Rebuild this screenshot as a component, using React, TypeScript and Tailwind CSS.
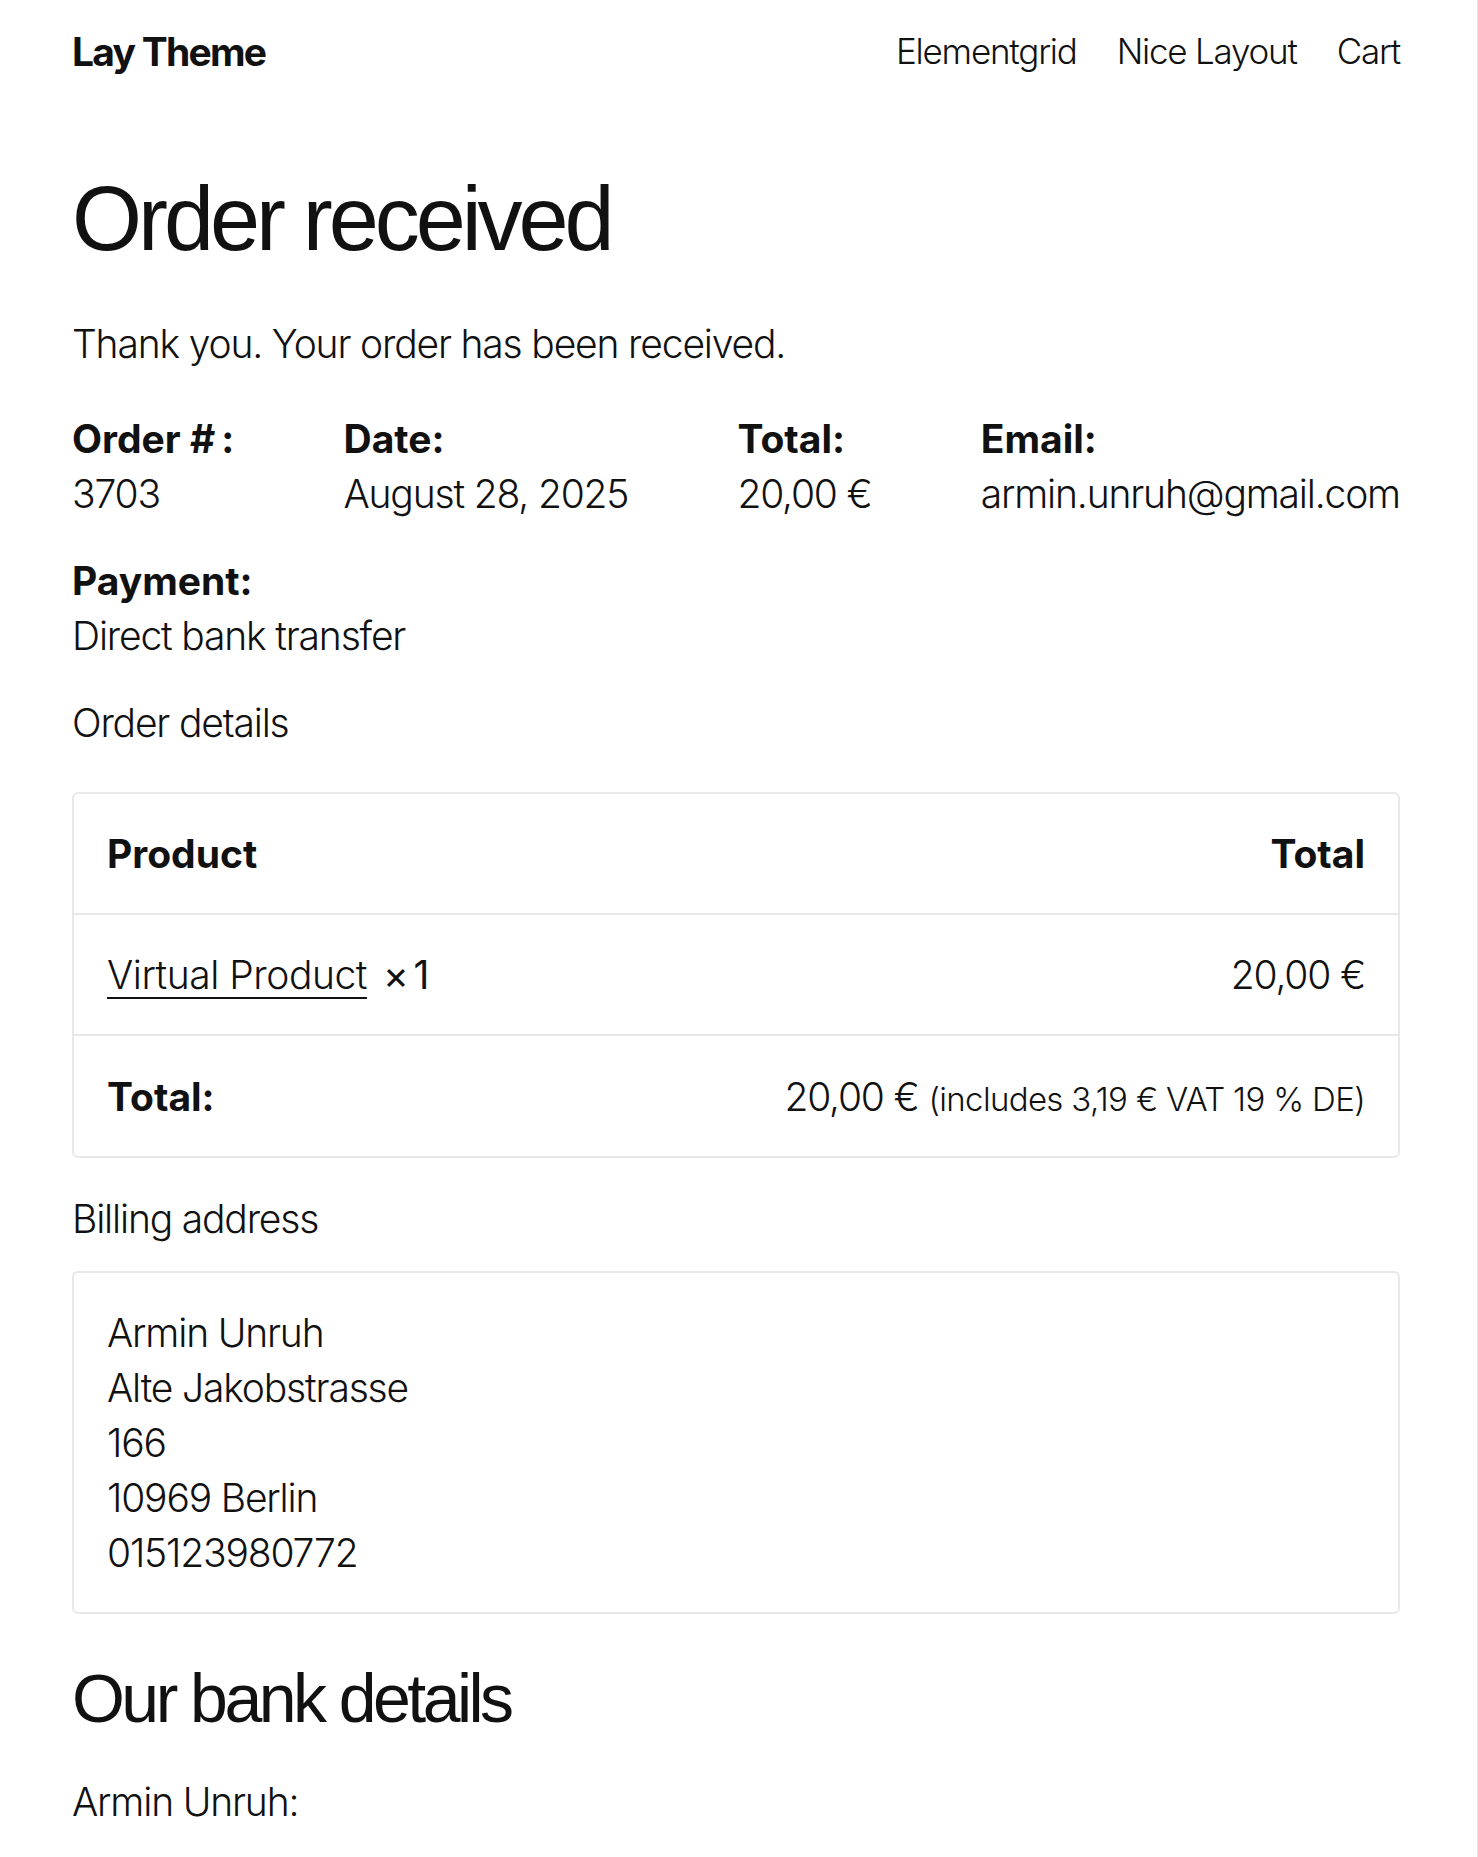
import React from "react";

const body = { fontFamily: "Inter, 'Noto Sans', sans-serif" } as React.CSSProperties;
const head = { fontFamily: "'Liberation Sans', Arial, sans-serif" } as React.CSSProperties;

export default function App() {
  return (
    <div
      className="min-h-[1857px] w-full bg-white text-[#111] border-r border-[#e4e4e4]"
      style={body}
    >
      <div className="pl-[72px] pr-[77px]">
        {/* Header */}
        <header className="flex items-center justify-between pt-[24px] leading-[55px]">
          <div className="text-[39px] font-bold tracking-[-0.045em]">Lay Theme</div>
          <nav className="flex gap-[40px] text-[35px] font-[260] tracking-[-0.035em]">
            <a>Elementgrid</a>
            <a>Nice Layout</a>
            <a>Cart</a>
          </nav>
        </header>

        <h1
          className="mt-[91px] text-[90px] leading-[99px] font-normal tracking-[-0.045em]"
          style={head}
        >
          Order received
        </h1>

        <div className="text-[39px] leading-[55px] font-[260] tracking-[-0.03em]">
          <p className="mt-[47px]">Thank you. Your order has been received.</p>

          <div className="mt-[40px] flex justify-between">
            <div>
              <div className="font-bold tracking-normal">Order #&thinsp;:</div>
              <div>3703</div>
            </div>
            <div>
              <div className="font-bold tracking-normal">Date:</div>
              <div>August 28, 2025</div>
            </div>
            <div>
              <div className="font-bold tracking-normal">Total:</div>
              <div>20,00 €</div>
            </div>
            <div>
              <div className="font-bold tracking-normal">Email:</div>
              <div>armin.unruh@gmail.com</div>
            </div>
          </div>

          <div className="mt-[32px]">
            <div className="font-bold tracking-normal">Payment:</div>
            <div>Direct bank transfer</div>
          </div>

          <h2 className="mt-[32px]">Order details</h2>

          <div className="mt-[42px] rounded-[6px] border-2 border-[#e8e8e8]">
            <div className="flex justify-between border-b-2 border-[#e8e8e8] px-[33px] py-[32px] font-bold tracking-normal">
              <span>Product</span>
              <span>Total</span>
            </div>
            <div className="flex justify-between border-b-2 border-[#e8e8e8] px-[33px] py-[32px]">
              <span>
                <a className="underline decoration-2 underline-offset-[8px] tracking-[-0.012em]">
                  Virtual Product
                </a>
                <span className="ml-[16px] font-normal">×&thinsp;1</span>
              </span>
              <span>20,00 €</span>
            </div>
            <div className="flex items-baseline justify-between px-[33px] pt-[33px] pb-[32px]">
              <span className="font-bold tracking-normal">Total:</span>
              <span className="h-[55px]">
                20,00 €{" "}
                <span className="text-[33px] leading-[0px] tracking-[-0.02em]">
                  (includes 3,19 € VAT 19 % DE)
                </span>
              </span>
            </div>
          </div>

          <h2 className="mt-[33px]">Billing address</h2>

          <div className="mt-[25px] rounded-[6px] border-2 border-[#e8e8e8] px-[33px] py-[32px]">
            <div>Armin Unruh</div>
            <div>Alte Jakobstrasse</div>
            <div>166</div>
            <div>10969 Berlin</div>
            <div>015123980772</div>
          </div>
        </div>

        <h2
          className="mt-[44px] text-[68px] leading-[80px] font-normal tracking-[-0.052em]"
          style={head}
        >
          Our bank details
        </h2>

        <h3 className="mt-[36px] text-[39px] leading-[55px] font-[260] tracking-[-0.03em]">
          Armin Unruh:
        </h3>
      </div>
    </div>
  );
}
